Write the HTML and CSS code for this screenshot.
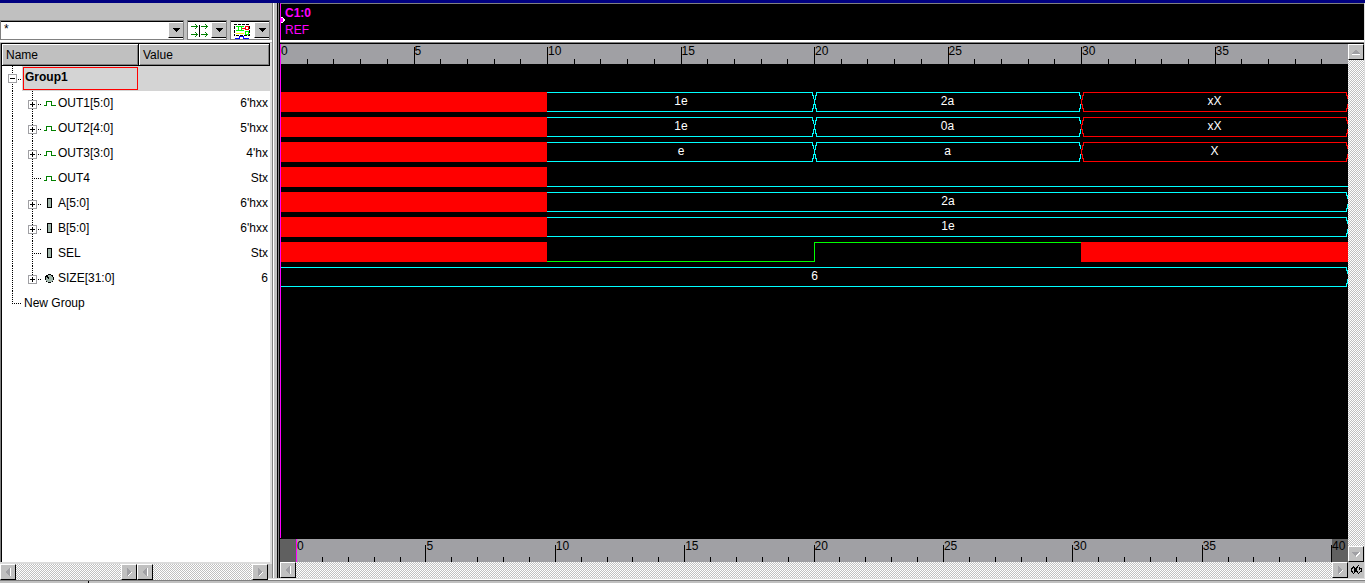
FILE: index.html
```html
<!DOCTYPE html>
<html lang="en">
<head>
<meta charset="utf-8">
<title>Waveform viewer</title>
<link rel="stylesheet" href="styles.css">
</head>
<body>
<svg class="defs" aria-hidden="true">
  <symbol id="plus" viewBox="0 0 56 25">
    <path d="M10.5 0V25M30.5 0V25M36 13.5H40" class="dots"/>
    <rect x="26.500" y="9.500" width="8" height="8" fill="#fff" stroke="#a0a0a4"/>
    <path d="M28 13.500H33M30.500 11V16" stroke="#000"/>
  </symbol>
  <symbol id="leaf" viewBox="0 0 56 25"><path d="M10.5 0V25M30.5 0V25M32 12.500H40" class="dots"/></symbol>
  <symbol id="pulse" viewBox="0 0 56 25"><path d="M42 14.500H44.500V10.500H49.500V14.500H54" fill="none" stroke="#008000"/></symbol>
  <symbol id="port" viewBox="0 0 56 25"><rect x="45.500" y="7.500" width="4" height="9" fill="#9fb5aa" stroke="#000"/></symbol>
  <symbol id="param" viewBox="0 0 56 25"><circle cx="47.500" cy="12.500" r="4" fill="#9fb5aa" stroke="#000"/><path d="M44 10H46V11H47V13H46V12H45V11H44Z" fill="#000"/></symbol>
  <symbol id="capL" viewBox="0 0 3 20"><path d="M3 .5H2.500V3L1.500 4V7L.5 8V12L1.500 13V16L2.500 17V19.500H3" fill="none" stroke="currentColor"/></symbol>
  <symbol id="capR" viewBox="0 0 3 20"><path d="M0 .5H1.500V3L2.500 4V7M2.500 12V16L1.500 17V19.500H0" fill="none" stroke="currentColor"/></symbol>
  <symbol id="left" viewBox="0 0 14 14"><path d="M4 7L9 3V11Z" fill="#a0a0a4"/><path d="M9.500 3V11" stroke="#fff"/></symbol>
  <symbol id="right" viewBox="0 0 14 14"><path d="M10 7L5 3V11Z" fill="#a0a0a4"/><path d="M10 7L5.500 11.500" stroke="#fff" fill="none"/></symbol>
  <symbol id="up" viewBox="0 0 14 14"><path d="M7 4L3 9H11Z" fill="#a0a0a4"/><path d="M3 9.500H11" stroke="#fff"/></symbol>
  <symbol id="down" viewBox="0 0 14 14"><path d="M7 10L3 5H11Z" fill="#a0a0a4"/><path d="M11 5.500L7 9.500" stroke="#fff"/></symbol>
  <symbol id="drop" viewBox="0 0 14 14"><path d="M3 5H11L7 9Z" fill="#000"/></symbol>
</svg>
<div class="titlebar"></div>
<main class="viewer">
  <section class="signals">
    <div class="toolbar">
      <div class="combo combo-filter">
        <input type="text" value="*" aria-label="Signal filter">
        <button aria-label="Filter history"><svg><use href="#drop"/></svg></button>
      </div>
      <div class="combo">
        <svg class="tool" viewBox="0 0 22 18"><path d="M2 4.500H9M6.500 2L9 4.500L6.500 7M2 12.500H9M6.500 10L9 12.500L6.500 15M12 4.500H19M16.500 2L19 4.500L16.500 7M12 12.500H19M16.500 10L19 12.500L16.500 15" stroke="#008000" fill="none"/><path d="M10.500 3V15" stroke="#000"/></svg>
        <button aria-label="Search mode"><svg><use href="#drop"/></svg></button>
      </div>
      <div class="combo">
        <svg class="tool" viewBox="0 0 22 18"><path d="M2.500 2.500H17.500V13.500H2.500Z" fill="none" stroke="#000" stroke-dasharray="3 1"/><path d="M4 4.500H12M4 8.500H12M6.500 4V9M9.500 4V9M13.500 9.500H16.500V12.500H13.500Z" fill="none" stroke="#0f0"/><path d="M4 11.500H12" stroke="#ff0"/><path d="M13.500 4.500H16.500V7.500H13.500ZM10 6.500H13" fill="none" stroke="red"/><path d="M3 16.500H8V14.500H12V16.500H17" fill="none" stroke="#00f"/></svg>
        <button aria-label="Display mode"><svg><use href="#drop"/></svg></button>
      </div>
    </div>
    <div class="list">
      <table>
        <colgroup><col class="col-name"><col></colgroup>
        <thead><tr><th>Name</th><th>Value</th></tr></thead>
        <tbody>
          <tr class="group"><td><div class="node"><svg class="stub" viewBox="0 0 20 25"><path d="M10.500 0V25M16 13.500H20" class="dots"/><rect x="6.500" y="8.500" width="8" height="8" fill="#fff" stroke="#a0a0a4"/><path d="M8 12.500H13" stroke="#000"/></svg><div class="group-cell"><strong>Group1</strong></div></div></td><td></td></tr>
          <tr><td><div class="node"><svg><use href="#plus"/><use href="#pulse"/></svg>OUT1[5:0]</div></td><td>6'hxx</td></tr>
          <tr><td><div class="node"><svg><use href="#plus"/><use href="#pulse"/></svg>OUT2[4:0]</div></td><td>5'hxx</td></tr>
          <tr><td><div class="node"><svg><use href="#plus"/><use href="#pulse"/></svg>OUT3[3:0]</div></td><td>4'hx</td></tr>
          <tr><td><div class="node"><svg><use href="#leaf"/><use href="#pulse"/></svg>OUT4</div></td><td>Stx</td></tr>
          <tr><td><div class="node"><svg><use href="#plus"/><use href="#port"/></svg>A[5:0]</div></td><td>6'hxx</td></tr>
          <tr><td><div class="node"><svg><use href="#plus"/><use href="#port"/></svg>B[5:0]</div></td><td>6'hxx</td></tr>
          <tr><td><div class="node"><svg><use href="#leaf"/><use href="#port"/></svg>SEL</div></td><td>Stx</td></tr>
          <tr><td><div class="node"><svg><path d="M10.500 0V25M30.500 0V12M36 13.500H40" class="dots"/><path d="M26.500 9.500H34.500V17.500H26.500Z" fill="#fff" stroke="#a0a0a4"/><path d="M28 13.500H33M30.500 11V16" stroke="#000"/><use href="#param"/></svg>SIZE[31:0]</div></td><td>6</td></tr>
          <tr><td><div class="node"><svg class="stub" viewBox="0 0 20 25"><path d="M10.500 0V12M10 12.500H20" class="dots"/></svg><span class="new">New Group</span></div></td><td></td></tr>
        </tbody>
      </table>
    </div>
    <div class="scrolls">
      <div class="scroll scroll-name"><button aria-label="Scroll names left"><svg><use href="#left"/></svg></button><button aria-label="Scroll names right"><svg><use href="#right"/></svg></button></div>
      <div class="scroll"><button aria-label="Scroll values left"><svg><use href="#left"/></svg></button><button aria-label="Scroll values right"><svg><use href="#right"/></svg></button></div>
    </div>
  </section>
  <div class="splitter"></div>
  <section class="waves">
    <header class="cursors">
      <strong>C1:0</strong><span>REF</span>
      <svg class="handle" viewBox="0 0 4 8"><path d="M0 1.500H1.500L3.500 4L1.500 6.500H0" fill="#f0f" stroke="#fff"/></svg>
    </header>
    <div class="body">
      <div class="plot">
        <div class="ruler ruler-top" data-last="39"></div>
        <div class="traces">
          <div class="trace"><i class="x"></i><div class="bus open"><b>1e</b></div><div class="bus"><b>2a</b></div><div class="bus bad"><b>xX</b></div></div>
          <div class="trace"><i class="x"></i><div class="bus open"><b>1e</b></div><div class="bus"><b>0a</b></div><div class="bus bad"><b>xX</b></div></div>
          <div class="trace"><i class="x"></i><div class="bus open"><b>e</b></div><div class="bus"><b>a</b></div><div class="bus bad"><b>X</b></div></div>
          <div class="trace"><i class="x"></i><i class="low span3 cyan"></i></div>
          <div class="trace"><i class="x"></i><div class="bus open span3"><b>2a</b></div></div>
          <div class="trace"><i class="x"></i><div class="bus open span3"><b>1e</b></div></div>
          <div class="trace"><i class="x"></i><i class="low"></i><i class="high"></i><i class="x"></i></div>
          <div class="trace"><div class="bus open span4"><b>6</b></div></div>
        </div>
        <div class="overview"><div class="ruler ruler-bottom" data-last="40"></div></div>
      </div>
      <div class="scroll vertical"><button aria-label="Scroll up"><svg><use href="#up"/></svg></button><button aria-label="Scroll down"><svg><use href="#down"/></svg></button></div>
    </div>
    <div class="foot">
      <div class="scroll"><button aria-label="Scroll time left"><svg><use href="#left"/></svg></button><button aria-label="Scroll time right"><svg><use href="#right"/></svg></button></div>
      <button class="sync" aria-label="Synchronise"><svg viewBox="0 0 16 16"><path d="M6 4.500L3.500 7V9L5.500 11.500L7.500 9V7L6 5.500V9M10.500 3.500L8.500 6V9L10.500 11.500L13.500 9V7L11 5V8" fill="none" stroke="#000"/></svg></button>
    </div>
  </section>
</main>
<footer class="status"><i></i></footer>
<script src="app.js"></script>
</body>
</html>
```
FILE: styles.css
```css
* { box-sizing: border-box; }
body {
  margin: 0;
  height: 100vh;
  display: flex;
  flex-direction: column;
  overflow: hidden;
  background: #c0c0c0;
  color: #000;
  font: 12px/15px "Liberation Sans", Arial, sans-serif;
}
.defs { position: absolute; width: 0; height: 0; }
svg { display: block; shape-rendering: crispEdges; }
.dots { fill: none; stroke: #000; stroke-dasharray: 1 1; }
.titlebar { height: 3px; background: #000080; }
.viewer { flex: 1; min-height: 0; display: flex; }
.signals { width: 272px; display: flex; flex-direction: column; }

.toolbar {
  height: 39px;
  padding-top: 17px;
  display: flex;
  gap: 3px;
  border-bottom: 2px solid #fff;
}
.combo {
  width: 40px;
  display: flex;
  background: #fff;
  border-top: 2px solid #000;
  border-left: 1px solid #000;
  outline: 1px solid #808080;
  outline-offset: -1px;
}
.combo-filter { width: 184px; }
.combo input {
  flex: 1;
  min-width: 0;
  border: 0;
  outline: 0;
  padding: 0 0 4px 3px;
  background: transparent;
  font: inherit;
}
.tool { flex: 1; height: 18px; }
button {
  width: 16px;
  height: 16px;
  padding: 0;
  flex: none;
  background: #c0c0c0;
  border: 1px solid;
  border-color: #fff #000 #000 #fff;
  border-radius: 0;
}
button svg { width: 14px; height: 14px; }

.list {
  flex: 1;
  min-height: 0;
  margin-top: 1px;
  background: #fff;
  border: solid #dcdcdc;
  border-width: 0 2px 2px 0;
  box-shadow: inset 1px 0 #808080, inset 2px 0 #000;
  padding-left: 2px;
}
table { width: 100%; border-collapse: separate; border-spacing: 0; table-layout: fixed; }
.col-name { width: 137px; }
th {
  height: 23px;
  padding: 1px 4px 0;
  text-align: left;
  font-weight: normal;
  background: #c0c0c0;
  border: 1px solid #000;
  border-width: 1px 1px 1px 0;
  box-shadow: inset 1px 1px #fff, inset -1px -1px #808080;
}
td { height: 25px; padding: 0; text-align: right; }
td + td { padding: 0 2px 1px 0; }
.node { display: flex; align-items: center; height: 25px; text-align: left; }
.node > svg { width: 56px; height: 25px; flex: none; }
.node > .stub { width: 20px; }
.group td + td { background: #d4d4d4; }
.group-cell { flex: 1; display: flex; padding: 1px 1px 0; background: #d4d4d4; }
.group strong { flex: 1; height: 23px; padding: 2px 1px; border: 1px solid red; }
.group .group-cell { height: 25px; }
.new { padding-left: 2px; }

.scrolls { display: flex; padding-right: 4px; position: relative; margin-bottom: -2px; }
.scroll {
  flex: 1;
  display: flex;
  justify-content: space-between;
  background: repeating-conic-gradient(#c0c0c0 0 25%, #fff 0 50%) 0 0 / 2px 2px;
}
.scroll-name { flex: 0 0 137px; }
.vertical { flex: 0 0 16px; flex-direction: column; }
.splitter {
  width: 8px;
  background: #c0c0c0;
  border-left: 1px solid #808080;
  border-right: 1px solid #000;
  box-shadow: inset 1px 0 #fff, inset -1px 0 #808080, inset -2px 0 #000;
}

.waves { flex: 1; min-width: 0; display: flex; flex-direction: column; border-right: 1px solid #dcdcdc; }
.cursors {
  position: relative;
  height: 37px;
  display: flex;
  flex-direction: column;
  padding: 1px 4px;
  line-height: 17px;
  background: #000;
  color: #f0f;
  border-top: 1px solid #808080;
  border-left: 1px solid #f0f;
}
.handle { position: absolute; left: 0; top: 12px; width: 4px; height: 8px; }
.body {
  flex: 1;
  min-height: 0;
  display: flex;
  border-top: 2px solid #fff;
  box-shadow: inset 0 1px #808080, inset 0 2px #000;
  padding-top: 2px;
}
.plot { position: relative; flex: 1; display: flex; flex-direction: column; background: #000; }
.plot::before { content: ""; position: absolute; left: 0; top: 0; bottom: 24px; width: 1px; background: #f0f; z-index: 1; }
.ruler { display: flex; background: #a0a0a4; }
.ruler-top { height: 20px; }
.ruler-bottom { height: 23px; box-shadow: inset 1px 0 #f0f; }
.unit { flex: 1 1 0; width: 0; display: flex; align-items: flex-end; }
.unit::before { content: ""; width: 1px; height: 5px; background: #000; flex: none; }
.unit.major { align-items: stretch; }
.unit.major::before { height: auto; margin-top: 3px; }
.ruler-bottom .major::before { margin-top: 6px; }
.unit.zero::before { visibility: hidden; }
.unit.end { flex: 0 0 17px; background: linear-gradient(90deg, #a0a0a4 1px, #606060 1px); }
.unit span { line-height: 15px; }
.overview { padding-left: 16px; background: #606060; }

.traces { flex: 1; display: flex; flex-direction: column; gap: 5px; padding-top: 28px; color: #fff; }
.trace { display: grid; grid-template-columns: repeat(4, 1fr); height: 20px; }
.x { background: red; }
.low { border-bottom: 1px solid #0f0; }
.high { border-top: 1px solid #0f0; border-left: 1px solid #0f0; }
.cyan { border-color: #0ff; }
.span3 { grid-column: span 3; }
.span4 { grid-column: span 4; }
.bus { display: flex; color: #0ff; }
.bus.bad { color: red; }
.bus svg { width: 3px; height: 20px; flex: none; }
.bus b { flex: 1; border: solid currentColor; border-width: 1px 0; text-align: center; font-weight: normal; line-height: 17px; }
.bus.open b { padding-left: 4px; }
.bus b span { color: #fff; }

.foot { display: flex; }
.sync { border: 0; }
.sync svg { width: 16px; height: 16px; }
.status { height: 5px; background: linear-gradient(#dcdcdc 1px, #fff 1px 2px, #808080 2px 3px, #c0c0c0 3px); }
.status i { display: block; width: 89px; height: 5px; border-right: 1px solid #000; clip-path: inset(3px 0 0 0); }
```
FILE: app.js
```js
// Fill each time ruler with one cell per time unit, labelled every five units.
document.querySelectorAll(".ruler").forEach((ruler) => {
  const last = Number(ruler.dataset.last);
  for (let t = 0; t <= last; t++) {
    const unit = document.createElement("div");
    unit.className = "unit";
    if (t % 5 === 0) {
      unit.classList.add("major");
      const label = document.createElement("span");
      label.textContent = t;
      unit.append(label);
    }
    if (t === 0) unit.classList.add("zero");
    if (t === 40) unit.classList.add("end");
    ruler.append(unit);
  }
});

// Close the ends of each bus segment where its value changes.
const cap = (id) => `<svg><use href="#${id}"/></svg>`;
document.querySelectorAll(".bus").forEach((bus) => {
  const value = bus.querySelector("b");
  value.innerHTML = `<span>${value.textContent}</span>`;
  if (!bus.classList.contains("open")) value.insertAdjacentHTML("beforebegin", cap("capL"));
  value.insertAdjacentHTML("afterend", cap("capR"));
});
```
